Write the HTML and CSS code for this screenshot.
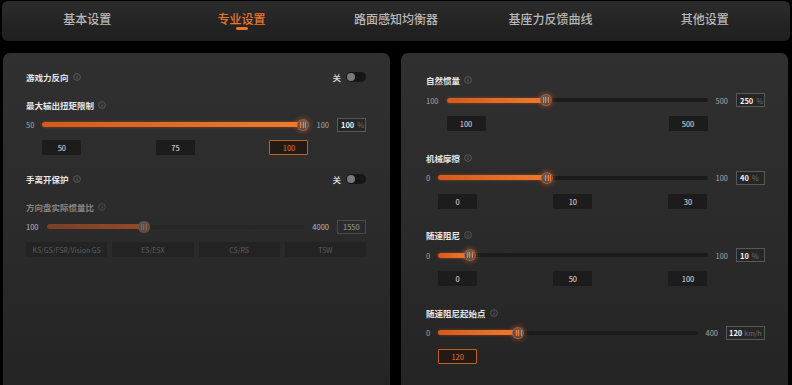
FILE: index.html
```html
<!DOCTYPE html>
<html lang="zh-CN">
<head>
<meta charset="utf-8">
<title>专业设置</title>
<link rel="stylesheet" href="styles.css">
</head>
<body>
<div class="page">
  <nav class="tabs">
    <div class="tab">基本设置</div>
    <div class="tab active">专业设置</div>
    <div class="tab">路面感知均衡器</div>
    <div class="tab">基座力反馈曲线</div>
    <div class="tab">其他设置</div>
  </nav>
  <div class="panels">
    <section class="panel left">
      <div class="row label-row first">
        <div class="label">游戏力反向<svg class="info" viewBox="0 0 8 8"><circle cx="4" cy="4" r="3.4" fill="none" stroke="#6a6a6a" stroke-width="0.7"/><path d="M4 3.4V6" stroke="#6a6a6a" stroke-width="0.8"/><circle cx="4" cy="2.3" r="0.45" fill="#6a6a6a"/></svg></div>
        <div class="switch-wrap"><span class="sw-text">关</span><span class="switch"></span></div>
      </div>
      <div class="row label-row m14">
        <div class="label">最大输出扭矩限制<svg class="info" viewBox="0 0 8 8"><circle cx="4" cy="4" r="3.4" fill="none" stroke="#6a6a6a" stroke-width="0.7"/><path d="M4 3.4V6" stroke="#6a6a6a" stroke-width="0.8"/><circle cx="4" cy="2.3" r="0.45" fill="#6a6a6a"/></svg></div>
      </div>
      <div class="slider-grid g55">
        <span class="min">50</span>
        <div class="track" style="--p:1"><div class="fill"></div><div class="thumb"></div></div>
        <span class="max">100</span>
        <div class="input"><b>100</b><i>%</i></div>
        <div class="presets">
          <span class="btn">50</span><span class="btn">75</span><span class="btn on">100</span>
        </div>
      </div>
      <div class="row label-row m17">
        <div class="label">手离开保护<svg class="info" viewBox="0 0 8 8"><circle cx="4" cy="4" r="3.4" fill="none" stroke="#6a6a6a" stroke-width="0.7"/><path d="M4 3.4V6" stroke="#6a6a6a" stroke-width="0.8"/><circle cx="4" cy="2.3" r="0.45" fill="#6a6a6a"/></svg></div>
        <div class="switch-wrap"><span class="sw-text">关</span><span class="switch"></span></div>
      </div>
      <div class="row label-row m13 disabled">
        <div class="label">方向盘实际惯量比<svg class="info" viewBox="0 0 8 8"><circle cx="4" cy="4" r="3.4" fill="none" stroke="#5a5a5a" stroke-width="0.7"/><path d="M4 3.4V6" stroke="#5a5a5a" stroke-width="0.8"/><circle cx="4" cy="2.3" r="0.45" fill="#5a5a5a"/></svg></div>
      </div>
      <div class="slider-grid g6 disabled">
        <span class="min">100</span>
        <div class="track" style="--p:0.3718"><div class="fill"></div><div class="thumb"></div></div>
        <span class="max">4000</span>
        <div class="input"><b>1550</b></div>
      </div>
      <div class="models">
        <span class="mbtn">KS/GS/FSR/Vision GS</span>
        <span class="mbtn">ES/ESX</span>
        <span class="mbtn">CS/RS</span>
        <span class="mbtn">TSW</span>
      </div>
    </section>

    <section class="panel right">
      <div class="group">
        <div class="row label-row">
          <div class="label">自然惯量<svg class="info" viewBox="0 0 8 8"><circle cx="4" cy="4" r="3.4" fill="none" stroke="#6a6a6a" stroke-width="0.7"/><path d="M4 3.4V6" stroke="#6a6a6a" stroke-width="0.8"/><circle cx="4" cy="2.3" r="0.45" fill="#6a6a6a"/></svg></div>
        </div>
        <div class="slider-grid g6">
          <span class="min">100</span>
          <div class="track" style="--p:0.375"><div class="fill"></div><div class="thumb"></div></div>
          <span class="max">500</span>
          <div class="input"><b>250</b><i>%</i></div>
          <div class="presets"><span class="btn">100</span><span class="btn">500</span></div>
        </div>
      </div>
      <div class="group">
        <div class="row label-row">
          <div class="label">机械摩擦<svg class="info" viewBox="0 0 8 8"><circle cx="4" cy="4" r="3.4" fill="none" stroke="#6a6a6a" stroke-width="0.7"/><path d="M4 3.4V6" stroke="#6a6a6a" stroke-width="0.8"/><circle cx="4" cy="2.3" r="0.45" fill="#6a6a6a"/></svg></div>
        </div>
        <div class="slider-grid g6">
          <span class="min">0</span>
          <div class="track" style="--p:0.4"><div class="fill"></div><div class="thumb"></div></div>
          <span class="max">100</span>
          <div class="input"><b>40</b><i>%</i></div>
          <div class="presets"><span class="btn">0</span><span class="btn">10</span><span class="btn">30</span></div>
        </div>
      </div>
      <div class="group">
        <div class="row label-row">
          <div class="label">随速阻尼<svg class="info" viewBox="0 0 8 8"><circle cx="4" cy="4" r="3.4" fill="none" stroke="#6a6a6a" stroke-width="0.7"/><path d="M4 3.4V6" stroke="#6a6a6a" stroke-width="0.8"/><circle cx="4" cy="2.3" r="0.45" fill="#6a6a6a"/></svg></div>
        </div>
        <div class="slider-grid g6">
          <span class="min">0</span>
          <div class="track" style="--p:0.1"><div class="fill"></div><div class="thumb"></div></div>
          <span class="max">100</span>
          <div class="input"><b>10</b><i>%</i></div>
          <div class="presets"><span class="btn">0</span><span class="btn">50</span><span class="btn">100</span></div>
        </div>
      </div>
      <div class="group">
        <div class="row label-row">
          <div class="label">随速阻尼起始点<svg class="info" viewBox="0 0 8 8"><circle cx="4" cy="4" r="3.4" fill="none" stroke="#6a6a6a" stroke-width="0.7"/><path d="M4 3.4V6" stroke="#6a6a6a" stroke-width="0.8"/><circle cx="4" cy="2.3" r="0.45" fill="#6a6a6a"/></svg></div>
        </div>
        <div class="slider-grid g6">
          <span class="min">0</span>
          <div class="track" style="--p:0.3"><div class="fill"></div><div class="thumb"></div></div>
          <span class="max">400</span>
          <div class="input wide"><b>120</b><i>km/h</i></div>
          <div class="presets"><span class="btn on">120</span></div>
        </div>
      </div>
    </section>
  </div>
</div>
</body>
</html>
```

FILE: styles.css
```css
* { box-sizing: border-box; }
html, body { margin: 0; padding: 0; }
body {
  background: #000;
  width: 792px;
  height: 385px;
  overflow: hidden;
  font-family: "Noto Sans CJK SC", "Noto Sans", sans-serif;
  color: #ddd;
}
.page {
  padding: 1px 2px 0 2px;
}
.tabs {
  height: 40px;
  border-radius: 6px;
  background: linear-gradient(180deg, #2c2c2c 0%, #232323 60%, #1f1f1f 100%);
  display: grid;
  grid-template-columns: repeat(5, 1fr);
  padding: 0 8px;
  align-items: center;
}
.tab {
  text-align: center;
  font-size: 12px;
  line-height: 12px;
  color: #b8b8b8;
  font-weight: 500;
  position: relative;
  margin-top: -4px;
}
.tab.active {
  color: #e8762c;
}
.tab.active::after {
  content: "";
  position: absolute;
  left: 50%;
  top: 14px;
  width: 12px;
  height: 3px;
  margin-left: -6px;
  border-radius: 2px;
  background: #e8762c;
}
.panels {
  display: flex;
  gap: 11px;
  padding-left: 1px;
  margin-top: 12px;
}
.panel {
  width: 387px;
  height: 340px;
  border-radius: 7px;
  background: linear-gradient(180deg, #303030 0%, #2b2b2b 50%, #242424 100%);
}
.panel.left { padding: 17px 24px 0 23px; }
.panel.right { padding: 20px 23px 0 25px; }

.row { display: flex; align-items: center; justify-content: space-between; }
.label-row { height: 14px; }
.m14 { margin-top: 14px; }
.m17 { margin-top: 17px; }
.m13 { margin-top: 13.5px; }
.label {
  font-size: 8.5px;
  font-weight: 700;
  color: #e6e6e6;
  display: flex;
  align-items: center;
}
.info { width: 8px; height: 8px; margin-left: 4px; }
.disabled .label { color: #858585; }

.switch-wrap { display: flex; align-items: center; gap: 5px; }
.sw-text { font-size: 8.5px; color: #ddd; font-weight: 500; }
.switch {
  width: 20px; height: 10px; border-radius: 5px;
  background: #161616;
  position: relative;
}
.switch::before {
  content: "";
  position: absolute;
  left: 1px; top: 1px;
  width: 8px; height: 8px; border-radius: 50%;
  background: #7a7a7a;
}

.slider-grid {
  display: grid;
  grid-template-columns: auto 1fr auto auto;
  grid-template-rows: 14px 15px;
  column-gap: 8px;
  row-gap: 9px;
  align-items: center;
}
.slider-grid.disabled { grid-template-rows: 14px; }
.g55 { margin-top: 5.5px; row-gap: 8.5px; }
.g6 { margin-top: 6px; }
.min, .max { font-size: 7.5px; color: #a8a8a8; }
.disabled .min, .disabled .max { color: #bbb; }

.track {
  position: relative;
  height: 4px;
  border-radius: 2px;
  background: #1b1b1b;
}
.fill {
  position: absolute;
  left: 0; top: -0.5px;
  height: 5px;
  width: calc(6px + var(--p) * (100% - 12px));
  border-radius: 3px;
  background: linear-gradient(90deg, #d8591b, #f07a2e);
  box-shadow: 0 0 3px rgba(240, 110, 40, 0.45);
}
.thumb {
  position: absolute;
  top: 50%;
  left: calc(var(--p) * (100% - 12px));
  width: 12px; height: 12px;
  margin-top: -6px;
  border-radius: 50%;
  background: radial-gradient(circle at 50% 40%, #7b6c65 0%, #5b4e48 60%, #463b36 100%);
  border: 1px solid rgba(210, 120, 70, 0.55);
  box-shadow: 0 0 5px 1px rgba(230, 100, 40, 0.45);
}
.thumb::after {
  content: "";
  position: absolute;
  left: 2.5px; top: 2px;
  width: 6px; height: 6px;
  background: linear-gradient(90deg, #f0803a 0 1px, transparent 1px 2.5px, #f0803a 2.5px 3.5px, transparent 3.5px 5px, #f0803a 5px 6px);
}
.disabled .track { background: #262626; }
.disabled .fill {
  background: linear-gradient(90deg, #7a4026, #944a2a);
  box-shadow: none;
}
.disabled .thumb {
  background: radial-gradient(circle at 50% 40%, #635a55 0%, #4e4642 100%);
  border-color: rgba(130, 90, 70, 0.5);
  box-shadow: 0 0 3px rgba(120, 70, 40, 0.3);
}
.disabled .thumb::after {
  background: linear-gradient(90deg, #9a5a3a 0 1px, transparent 1px 2.5px, #9a5a3a 2.5px 3.5px, transparent 3.5px 5px, #9a5a3a 5px 6px);
}

.input {
  width: 29px; height: 14px;
  border: 1px solid #585858;
  background: #262626;
  display: flex;
  align-items: center;
  padding-left: 3px;
  gap: 3px;
  font-size: 7.5px;
  white-space: nowrap;
  overflow: hidden;
}
.input.wide { width: 39px; padding-left: 2px; gap: 2px; }
.input.wide i { font-size: 7px; }
.input b { color: #f2f2f2; font-weight: 700; }
.input i { font-style: normal; color: #707070; }
.disabled .input { border-color: #4a4a4a; background: #2a2a2a; padding-left: 5px; }
.disabled .input b { color: #a0a0a0; font-weight: 400; }

.presets {
  grid-column: 2;
  display: flex;
  justify-content: space-between;
  height: 15px;
}
.btn {
  width: 39px; height: 15px;
  background: #1c1c1c;
  border-radius: 1px;
  font-size: 7.5px;
  color: #e0e0e0;
  display: flex; align-items: center; justify-content: center;
}
.btn.on {
  border: 1px solid #c0611f;
  color: #e8762c;
  background: #231a15;
}

.models {
  margin-top: 8.5px;
  display: grid;
  grid-template-columns: repeat(4, 1fr);
  gap: 5px;
}
.mbtn {
  height: 15px;
  background: #232323;
  border-radius: 1px;
  font-size: 7px;
  color: #5e5e5e;
  display: flex; align-items: center; justify-content: center;
}

.group + .group { margin-top: 19.5px; }
```
